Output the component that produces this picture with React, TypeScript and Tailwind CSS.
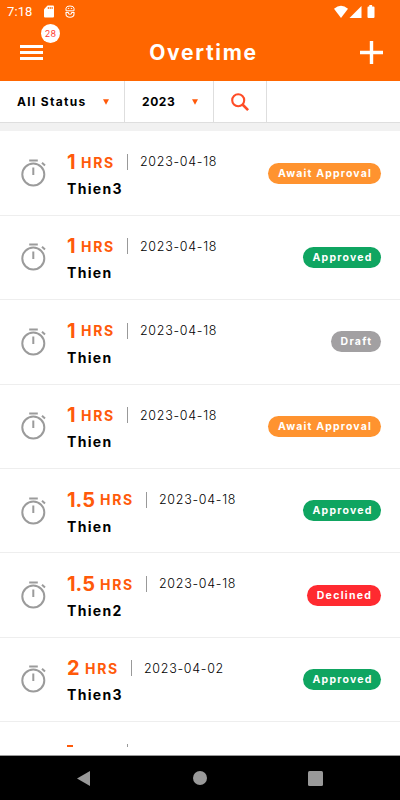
type Status = 'await' | 'approved' | 'draft' | 'declined'

type Entry = {
  hours: string
  date: string
  name: string
  status: Status
}

const entries: Entry[] = [
  { hours: '1', date: '2023-04-18', name: 'Thien3', status: 'await' },
  { hours: '1', date: '2023-04-18', name: 'Thien', status: 'approved' },
  { hours: '1', date: '2023-04-18', name: 'Thien', status: 'draft' },
  { hours: '1', date: '2023-04-18', name: 'Thien', status: 'await' },
  { hours: '1.5', date: '2023-04-18', name: 'Thien', status: 'approved' },
  { hours: '1.5', date: '2023-04-18', name: 'Thien2', status: 'declined' },
  { hours: '2', date: '2023-04-02', name: 'Thien3', status: 'approved' },
]

const badges: Record<Status, { label: string; className: string }> = {
  await: { label: 'Await Approval', className: 'w-[113px] bg-[#ff932f] tracking-[1.15px]' },
  approved: { label: 'Approved', className: 'w-[78px] bg-[#0fa561] tracking-[1.2px]' },
  draft: { label: 'Draft', className: 'w-[50px] bg-[#a2a0a2] tracking-[1.3px]' },
  declined: { label: 'Declined', className: 'w-[74px] bg-[#ff2a30] tracking-[1.3px]' },
}

const hoursWidth: Record<string, string> = {
  '1': 'w-[14px]',
  '1.5': 'w-[33px]',
  '2': 'w-[18px]',
}

export default function App() {
  return (
    <div className="flex h-[800px] w-[400px] flex-col overflow-hidden bg-white font-['Inter',sans-serif] text-black">
      <Header />
      <FilterBar />
      <div className="h-[8.4px] shrink-0 bg-[#f1f1f1]" />
      <div className="min-h-0 flex-1 overflow-hidden border-b border-[#999]">
        {entries.map((e, i) => (
          <EntryRow key={i} entry={e} />
        ))}
        <NextRowPeek />
      </div>
      <NavBar />
    </div>
  )
}

function Header() {
  return (
    <div className="h-[81px] shrink-0 bg-[#ff6600] text-white">
      <div className="flex h-[23px] items-center pl-[7px] pr-[25px]">
        <span className="w-[37px] font-['Roboto',sans-serif] text-[13px] leading-none tracking-[0.1px]">7:18</span>
        <svg width="10" height="13" viewBox="0 0 10 13">
          <path d="M3.6.5H9q1 0 1 1v10q0 1-1 1H1q-1 0-1-1V4.2Z" fill="white" />
          <path d="M4.3 2v2M6.2 2v2M8.1 2v2" stroke="#ff6600" strokeWidth="1" />
        </svg>
        <svg className="ml-[11px]" width="10" height="13" viewBox="0 0 10 13" fill="none" stroke="white">
          <path d="M1 5.8V3.2Q1 1 5 1t4 2.2v2.6Z" strokeWidth="1" />
          <path d="M2.8 3.4h1.4M5.8 3.4h1.4" strokeWidth="1" />
          <path d="M1 7.5h2.2Q3.4 9.2 5 9.2t1.8-1.7H9V9q0 3.2-4 3.2T1 9Z" strokeWidth="1.1" />
        </svg>
        <svg className="ml-auto" width="41" height="14" viewBox="0 0 41 14" fill="white">
          <path d="M0 3.8Q7-2.2 14 3.8L7 13Z" />
          <path d="M27.5 1v12H15.5Z" />
          <path d="M35.3 0h2.8v1.4h1.4q1 0 1 1V12q0 1-1 1h-5q-1 0-1-1V2.4q0-1 1-1h.8Z" />
        </svg>
      </div>
      <div className="grid h-[58px] grid-cols-[1fr_auto_1fr] items-center pl-[20px] pr-[17px]">
        <div className="relative flex w-[23px] flex-col gap-[3px]">
          <span className="h-[3px] bg-white" />
          <span className="h-[3px] bg-white" />
          <span className="h-[3px] bg-white" />
          <span className="absolute -top-[21px] left-[21px] flex size-[19px] items-center justify-center rounded-full bg-white pt-px text-[9px] tracking-[0.3px] text-[#ff3b30]">
            28
          </span>
        </div>
        <h1 className="pl-[4px] pt-px text-[21px] font-bold leading-none tracking-[1.7px]">Overtime</h1>
        <svg className="ml-auto" width="23" height="23" viewBox="0 0 23 23" stroke="white" strokeWidth="3.4">
          <path d="M11.5 0v23M0 11.5h23" />
        </svg>
      </div>
    </div>
  )
}

function FilterBar() {
  return (
    <div className="flex h-[42px] shrink-0 border-b border-[#dedede] text-[12px] font-bold">
      <div className="flex w-[125px] items-center justify-between border-r border-[#dedede] pl-[17px] pr-[15px]">
        <span className="pt-px tracking-[1.35px]">All Status</span>
        <Caret />
      </div>
      <div className="flex w-[89px] items-center justify-between border-r border-[#dedede] pl-[17px] pr-[15px]">
        <span className="pt-px tracking-[0.6px]">2023</span>
        <Caret />
      </div>
      <div className="flex w-[53px] items-center justify-center border-r border-[#dedede]">
        <svg width="18" height="18" viewBox="0 0 18 18" fill="none" stroke="#ff4c26">
          <circle cx="7.2" cy="7.2" r="6" strokeWidth="2.1" />
          <path d="m11.5 11.5 5.6 5.6" strokeWidth="2.6" />
        </svg>
      </div>
    </div>
  )
}

function Caret() {
  return (
    <svg width="6" height="6" viewBox="0 0 6 6" fill="#ff5a0a">
      <path d="M0 .3h6L3 5.7Z" />
    </svg>
  )
}

function EntryRow({ entry }: { entry: Entry }) {
  const badge = badges[entry.status]
  return (
    <div className="flex h-[84.4px] items-center border-b border-[#eee] pl-[21px] pr-[19px]">
      <Stopwatch />
      <div className="ml-[20px] flex flex-col pt-[3px]">
        <div className="flex h-[20px] items-center">
          <span className={`${hoursWidth[entry.hours]} text-[20px] font-bold leading-none text-[#ff5a0a]`}>
            {entry.hours}
          </span>
          <span className="w-[46px] pt-px text-[14px] font-bold leading-none tracking-[1.7px] text-[#ff5a0a]">
            HRS
          </span>
          <span className="h-[16px] w-px bg-[#999]" />
          <span className="ml-[12px] pt-px text-[12.5px] font-light leading-none tracking-[0.7px]">{entry.date}</span>
        </div>
        <div className="mt-[9px] text-[14px] font-bold leading-[16px] tracking-[1.3px]">{entry.name}</div>
      </div>
      <div
        className={`${badge.className} ml-auto flex h-[21px] items-center justify-center rounded-full pl-px pt-px text-[10.5px] font-bold text-white`}
      >
        {badge.label}
      </div>
    </div>
  )
}

// top edge of the row that is still below the fold
function NextRowPeek() {
  return (
    <div className="flex h-[25px] items-end pl-[67px]">
      <span className="h-[2px] w-[6px] bg-[#ff5a0a]" />
      <span className="ml-[54px] h-[3px] w-px bg-[#999]" />
    </div>
  )
}

function Stopwatch() {
  return (
    <svg width="26" height="30" viewBox="0 0 26 30" fill="none" stroke="#9b9b9b" strokeWidth="2">
      <circle cx="12.3" cy="16.5" r="11" />
      <path d="M8.2 2.6h8.6M12.3 9.5v7.5M21 4.8l3 2.8" />
    </svg>
  )
}

function NavBar() {
  return (
    <div className="flex h-[44px] shrink-0 items-center justify-between bg-black pl-[77px] pr-[77px]">
      <svg width="13" height="15" viewBox="0 0 13 15" fill="#999">
        <path d="M13 0v15L0 7.5Z" />
      </svg>
      <span className="ml-[2px] size-[14px] rounded-full bg-[#999]" />
      <span className="size-[15px] rounded-[1.5px] bg-[#999]" />
    </div>
  )
}
